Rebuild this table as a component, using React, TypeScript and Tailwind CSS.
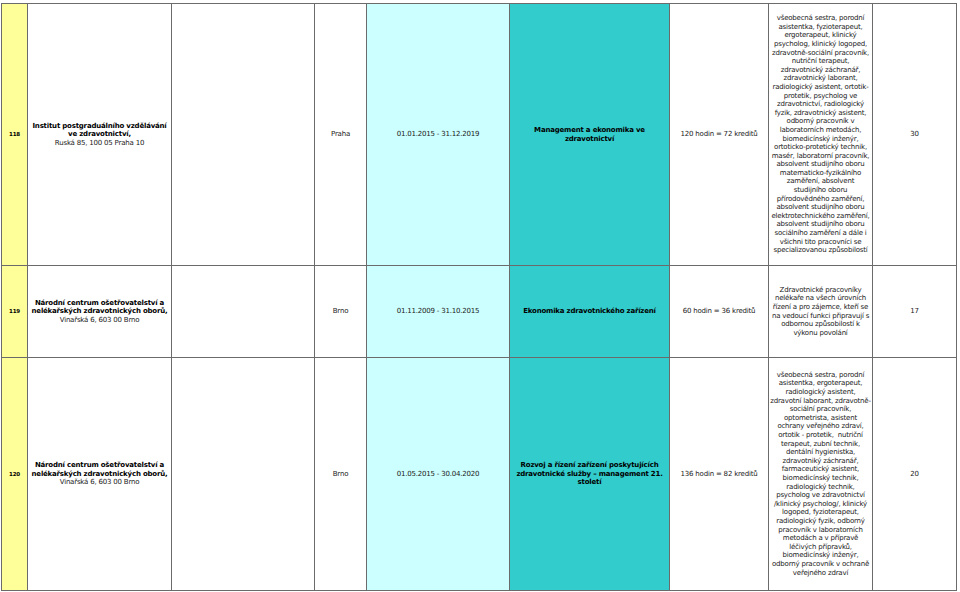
const rows = [
  {
    no: "118",
    height: "h-[262px]",
    inst: ["Institut postgraduálního vzdělávání", "ve zdravotnictví,"],
    addr: "Ruská 85, 100 05 Praha 10",
    city: "Praha",
    dates: "01.01.2015 - 31.12.2019",
    course: ["Management a ekonomika ve", "zdravotnictví"],
    hours: "120 hodin = 72 kreditů",
    who: [
      "všeobecná sestra, porodní",
      "asistentka, fyzioterapeut,",
      "ergoterapeut, klinický",
      "psycholog, klinický logoped,",
      "zdravotně-sociální pracovník,",
      "nutriční terapeut,",
      "zdravotnický záchranář,",
      "zdravotnický laborant,",
      "radiologický asistent, ortotik-",
      "protetik, psycholog ve",
      "zdravotnictví, radiologický",
      "fyzik, zdravotnický asistent,",
      "odborný pracovník v",
      "laboratorních metodách,",
      "biomedicínský inženýr,",
      "ortoticko-protetický technik,",
      "masér, laboratorní pracovník,",
      "absolvent studijního oboru",
      "matematicko-fyzikálního",
      "zaměření, absolvent",
      "studijního oboru",
      "přírodovědného zaměření,",
      "absolvent studijního oboru",
      "elektrotechnického zaměření,",
      "absolvent studijního oboru",
      "sociálního zaměření a dále i",
      "všichni tito pracovníci se",
      "specializovanou způsobilostí",
    ],
    count: "30",
  },
  {
    no: "119",
    height: "h-[92px]",
    inst: ["Národní centrum ošetřovatelství a", "nelékařských zdravotnických oborů,"],
    addr: "Vinařská 6, 603 00 Brno",
    city: "Brno",
    dates: "01.11.2009 - 31.10.2015",
    course: ["Ekonomika zdravotnického zařízení"],
    hours: "60 hodin = 36 kreditů",
    who: [
      "Zdravotnické pracovníky",
      "nelékaře na všech úrovních",
      "řízení a pro zájemce, kteří se",
      "na vedoucí funkci připravují s",
      "odbornou způsobilostí k",
      "výkonu povolání",
    ],
    count: "17",
  },
  {
    no: "120",
    height: "h-[233px]",
    inst: ["Národní centrum ošetřovatelství a", "nelékařských zdravotnických oborů,"],
    addr: "Vinařská 6, 603 00 Brno",
    city: "Brno",
    dates: "01.05.2015 - 30.04.2020",
    course: ["Rozvoj a řízení zařízení poskytujících", "zdravotnické služby – management 21.", "století"],
    hours: "136 hodin = 82 kreditů",
    who: [
      "všeobecná sestra, porodní",
      "asistentka, ergoterapeut,",
      "radiologický asistent,",
      "zdravotní laborant, zdravotně-",
      "sociální pracovník,",
      "optometrista, asistent",
      "ochrany veřejného zdraví,",
      "ortotik - protetik,  nutriční",
      "terapeut, zubní technik,",
      "dentální hygienistka,",
      "zdravotniký záchranář,",
      "farmaceutický asistent,",
      "biomedicínský technik,",
      "radiologický technik,",
      "psycholog ve zdravotnictví",
      "/klinický psycholog/, klinický",
      "logoped, fyzioterapeut,",
      "radiologický fyzik, odborný",
      "pracovník v laboratorních",
      "metodách a v přípravě",
      "léčivých přípravků,",
      "biomedicínský inženýr,",
      "odborný pracovník v ochraně",
      "veřejného zdraví",
    ],
    count: "20",
  },
];

const td = "border border-[#6b6b6b] p-0 text-center align-middle";

export default function App() {
  return (
    <div className="w-[960px] h-[592px] bg-white pt-[3px] pl-[1px] font-['DejaVu_Sans','Verdana',sans-serif] text-[7px] leading-[8.6px] tracking-[-0.2px] text-[#1a1a1a]">
      <table className="w-[955px] table-fixed border-collapse border border-[#5e5e5e]">
        <colgroup>
          <col className="w-[26px]" />
          <col className="w-[144px]" />
          <col className="w-[143px]" />
          <col className="w-[52px]" />
          <col className="w-[143px]" />
          <col className="w-[160px]" />
          <col className="w-[99px]" />
          <col className="w-[104px]" />
          <col className="w-[84px]" />
        </colgroup>
        <tbody>
          {rows.map((r) => (
            <tr key={r.no} className={r.height}>
              <td className={`${td} bg-[#ffff99] font-bold text-[5.5px] text-black`}>{r.no}</td>
              <td className={td}>
                {r.inst.map((l) => (
                  <div key={l} className="font-bold text-black whitespace-nowrap">
                    {l}
                  </div>
                ))}
                <div className="whitespace-nowrap">{r.addr}</div>
              </td>
              <td className={td}></td>
              <td className={td}>{r.city}</td>
              <td className={`${td} bg-[#ccffff]`}>{r.dates}</td>
              <td className={`${td} bg-[#33cccc] font-bold text-black`}>
                {r.course.map((l) => (
                  <div key={l} className="whitespace-nowrap">
                    {l}
                  </div>
                ))}
              </td>
              <td className={td}>{r.hours}</td>
              <td className={td}>
                {r.who.map((l, i) => (
                  <div key={i} className="whitespace-pre">
                    {l}
                  </div>
                ))}
              </td>
              <td className={td}>{r.count}</td>
            </tr>
          ))}
        </tbody>
      </table>
    </div>
  );
}
